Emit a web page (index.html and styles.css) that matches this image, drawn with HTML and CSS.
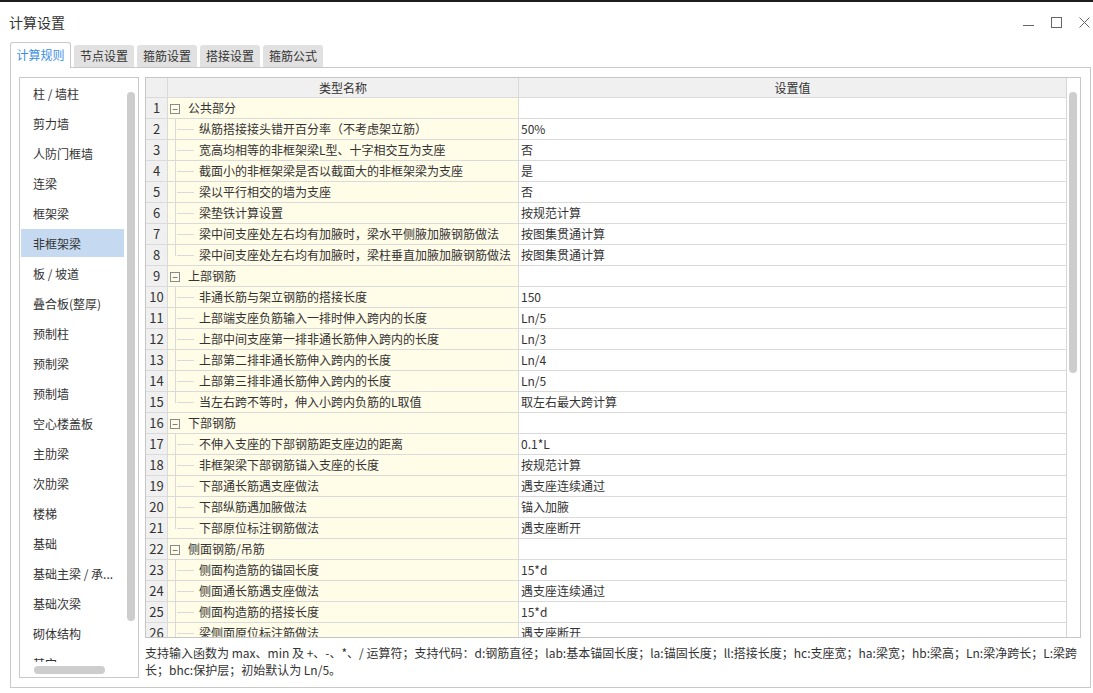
FILE: index.html
```html
<!DOCTYPE html>
<html lang="zh-CN">
<head>
<meta charset="utf-8">
<title>计算设置</title>
<link rel="stylesheet" href="styles.css">
</head>
<body>
<div class="topstrip"></div>
<div class="titlebar">
  <div class="title">计算设置</div>
  <div class="controls">
    <svg class="ctl" width="11" height="11" viewBox="0 0 11 11"><path d="M0 8.5H11" stroke="#666" stroke-width="1"/></svg>
    <svg class="ctl" width="11" height="11" viewBox="0 0 11 11"><rect x="0.5" y="0.5" width="10" height="10" fill="none" stroke="#666" stroke-width="1"/></svg>
    <svg class="ctl" width="11" height="11" viewBox="0 0 11 11"><path d="M0.5 0.5L10.5 10.5M10.5 0.5L0.5 10.5" stroke="#666" stroke-width="1"/></svg>
  </div>
</div>
<div class="tabs">
  <div class="tab active">计算规则</div>
  <div class="tab">节点设置</div>
  <div class="tab">箍筋设置</div>
  <div class="tab">搭接设置</div>
  <div class="tab">箍筋公式</div>
</div>
<div class="panel">
  <div class="listbox">
    <div class="items">
      <div class="item">柱 / 墙柱</div>
      <div class="item">剪力墙</div>
      <div class="item">人防门框墙</div>
      <div class="item">连梁</div>
      <div class="item">框架梁</div>
      <div class="item selected">非框架梁</div>
      <div class="item">板 / 坡道</div>
      <div class="item">叠合板(整厚)</div>
      <div class="item">预制柱</div>
      <div class="item">预制梁</div>
      <div class="item">预制墙</div>
      <div class="item">空心楼盖板</div>
      <div class="item">主肋梁</div>
      <div class="item">次肋梁</div>
      <div class="item">楼梯</div>
      <div class="item">基础</div>
      <div class="item">基础主梁 / 承...</div>
      <div class="item">基础次梁</div>
      <div class="item">砌体结构</div>
      <div class="item">其它</div>
    </div>
    <div class="vtrack"><div class="vthumb list-thumb"></div></div>
    <div class="htrack"><div class="hthumb"></div></div>
    <div class="corner"></div>
  </div>
  <div class="main">
    <div class="table">
      <div class="rows">
        <div class="row head"><div class="c num"></div><div class="c name hc">类型名称</div><div class="c val hc">设置值</div></div>

        <div class="row"><div class="c num">1</div><div class="c name grp"><span class="box">−</span>公共部分</div><div class="c val"></div></div>
        <div class="row"><div class="c num">2</div><div class="c name child"><span class="guide"></span>纵筋搭接接头错开百分率（不考虑架立筋）</div><div class="c val">50%</div></div>
        <div class="row"><div class="c num">3</div><div class="c name child"><span class="guide"></span>宽高均相等的非框架梁L型、十字相交互为支座</div><div class="c val">否</div></div>
        <div class="row"><div class="c num">4</div><div class="c name child"><span class="guide"></span>截面小的非框架梁是否以截面大的非框架梁为支座</div><div class="c val">是</div></div>
        <div class="row"><div class="c num">5</div><div class="c name child"><span class="guide"></span>梁以平行相交的墙为支座</div><div class="c val">否</div></div>
        <div class="row"><div class="c num">6</div><div class="c name child"><span class="guide"></span>梁垫铁计算设置</div><div class="c val">按规范计算</div></div>
        <div class="row"><div class="c num">7</div><div class="c name child"><span class="guide"></span>梁中间支座处左右均有加腋时，梁水平侧腋加腋钢筋做法</div><div class="c val">按图集贯通计算</div></div>
        <div class="row"><div class="c num">8</div><div class="c name child last"><span class="guide"></span>梁中间支座处左右均有加腋时，梁柱垂直加腋加腋钢筋做法</div><div class="c val">按图集贯通计算</div></div>

        <div class="row"><div class="c num">9</div><div class="c name grp"><span class="box">−</span>上部钢筋</div><div class="c val"></div></div>
        <div class="row"><div class="c num">10</div><div class="c name child"><span class="guide"></span>非通长筋与架立钢筋的搭接长度</div><div class="c val">150</div></div>
        <div class="row"><div class="c num">11</div><div class="c name child"><span class="guide"></span>上部端支座负筋输入一排时伸入跨内的长度</div><div class="c val">Ln/5</div></div>
        <div class="row"><div class="c num">12</div><div class="c name child"><span class="guide"></span>上部中间支座第一排非通长筋伸入跨内的长度</div><div class="c val">Ln/3</div></div>
        <div class="row"><div class="c num">13</div><div class="c name child"><span class="guide"></span>上部第二排非通长筋伸入跨内的长度</div><div class="c val">Ln/4</div></div>
        <div class="row"><div class="c num">14</div><div class="c name child"><span class="guide"></span>上部第三排非通长筋伸入跨内的长度</div><div class="c val">Ln/5</div></div>
        <div class="row"><div class="c num">15</div><div class="c name child last"><span class="guide"></span>当左右跨不等时，伸入小跨内负筋的L取值</div><div class="c val">取左右最大跨计算</div></div>

        <div class="row"><div class="c num">16</div><div class="c name grp"><span class="box">−</span>下部钢筋</div><div class="c val"></div></div>
        <div class="row"><div class="c num">17</div><div class="c name child"><span class="guide"></span>不伸入支座的下部钢筋距支座边的距离</div><div class="c val">0.1*L</div></div>
        <div class="row"><div class="c num">18</div><div class="c name child"><span class="guide"></span>非框架梁下部钢筋锚入支座的长度</div><div class="c val">按规范计算</div></div>
        <div class="row"><div class="c num">19</div><div class="c name child"><span class="guide"></span>下部通长筋遇支座做法</div><div class="c val">遇支座连续通过</div></div>
        <div class="row"><div class="c num">20</div><div class="c name child"><span class="guide"></span>下部纵筋遇加腋做法</div><div class="c val">锚入加腋</div></div>
        <div class="row"><div class="c num">21</div><div class="c name child last"><span class="guide"></span>下部原位标注钢筋做法</div><div class="c val">遇支座断开</div></div>

        <div class="row"><div class="c num">22</div><div class="c name grp"><span class="box">−</span>侧面钢筋/吊筋</div><div class="c val"></div></div>
        <div class="row"><div class="c num">23</div><div class="c name child"><span class="guide"></span>侧面构造筋的锚固长度</div><div class="c val">15*d</div></div>
        <div class="row"><div class="c num">24</div><div class="c name child"><span class="guide"></span>侧面通长筋遇支座做法</div><div class="c val">遇支座连续通过</div></div>
        <div class="row"><div class="c num">25</div><div class="c name child"><span class="guide"></span>侧面构造筋的搭接长度</div><div class="c val">15*d</div></div>
        <div class="row"><div class="c num">26</div><div class="c name child"><span class="guide"></span>梁侧面原位标注筋做法</div><div class="c val">遇支座断开</div></div>
      </div>
      <div class="tscroll"><div class="vthumb table-thumb"></div></div>
    </div>
    <div class="note">支持输入函数为 max、min 及 +、-、*、/ 运算符；支持代码：d:钢筋直径；lab:基本锚固长度；la:锚固长度；ll:搭接长度；hc:支座宽；ha:梁宽；hb:梁高；Ln:梁净跨长；L:梁跨<br>长；bhc:保护层；初始默认为 Ln/5。</div>
  </div>
</div>
</body>
</html>
```
FILE: styles.css
```css
* { box-sizing: border-box; }
html, body { margin: 0; padding: 0; background: #fff; }
body {
  width: 1093px;
  height: 693px;
  overflow: hidden;
  font-family: "Noto Sans CJK SC", "Microsoft YaHei", sans-serif;
  font-size: 12px;
  color: #333;
}
.topstrip { height: 2px; background: #1d1d1d; }
.titlebar {
  height: 40px;
  display: flex;
  align-items: center;
  justify-content: space-between;
  padding: 0 3px 0 9px;
}
.title { font-size: 14px; line-height: 20px; color: #333; }
.controls { display: flex; gap: 17px; align-items: center; padding-top: 1px; }
.ctl { display: block; }

.tabs {
  height: 25px;
  display: flex;
  align-items: flex-end;
  gap: 3px;
  padding-left: 10px;
}
.tab {
  width: 60px;
  height: 22px;
  background: #e1e1e1;
  border-radius: 3px 3px 0 0;
  display: flex;
  align-items: center;
  justify-content: center;
  line-height: 16px;
  color: #333;
}
.tab.active {
  width: 61px;
  height: 26px;
  margin-bottom: -1px;
  background: #fff;
  border: 1px solid #c9c9c9;
  border-bottom: none;
  color: #3a8ee6;
  position: relative;
  z-index: 1;
  padding-bottom: 1px;
}

.panel {
  width: 1081px;
  height: 621px;
  margin-left: 10px;
  border: 1px solid #c9c9c9;
  padding: 9px 9px 9px 8px;
  display: flex;
  gap: 6px;
}

.listbox {
  width: 120px;
  height: 601px;
  border: 1px solid #c9c9c9;
  display: grid;
  grid-template-columns: 1fr 14px;
  grid-template-rows: 1fr 15px;
  overflow: hidden;
}
.items { padding-top: 1px; overflow: hidden; }
.item {
  width: 103px;
  height: 28px;
  margin: 0 0 2px 1px;
  padding-left: 12px;
  display: flex;
  align-items: center;
  white-space: nowrap;
  color: #333;
}
.item.selected { background: #c5daf1; }
.vtrack { position: relative; }
.vthumb { width: 8px; background: #cdcdcd; border-radius: 4px; }
.list-thumb { margin: 14px 0 0 3px; height: 529px; }
.hthumb { width: 71px; height: 8px; margin: 4px 0 0 14px; background: #cdcdcd; border-radius: 4px; }

.main { flex: 1; display: flex; flex-direction: column; }
.table {
  height: 561px;
  border: 1px solid #c6c6c6;
  display: flex;
  overflow: hidden;
}
.rows { flex: 1; overflow: hidden; }
.tscroll { width: 14px; border-left: 1px solid #d6d6d6; background: #fff; }
.table-thumb { margin: 14px 0 0 2px; height: 281px; }

.row {
  display: grid;
  grid-template-columns: 22px 351px 1fr;
  height: 21px;
  border-bottom: 1px solid #dadada;
}
.row.head { height: 20px; background: #f0f0f0; }
.c {
  display: flex;
  align-items: center;
  white-space: nowrap;
  overflow: hidden;
  line-height: 16px;
}
.num {
  background: #f0f0f0;
  border-right: 1px solid #dadada;
  justify-content: center;
  font-size: 13px;
  color: #333;
}
.name {
  background: #fffce8;
  border-right: 1px solid #dadada;
}
.head .name { background: #f0f0f0; }
.val { padding-left: 2px; background: #fff; }
.head .val { background: #f0f0f0; }
.hc { justify-content: center; padding-left: 0; }

.grp { padding-left: 2px; }
.box {
  width: 10px;
  height: 10px;
  border: 1px solid #8a8a8a;
  margin-right: 8px;
  margin-top: 1px;
  display: flex;
  align-items: center;
  justify-content: center;
  font-size: 10px;
  line-height: 8px;
  color: #555;
  flex: none;
}
.child { align-self: stretch; }
.guide {
  flex: none;
  align-self: stretch;
  width: 19px;
  margin: 0 5px 0 7px;
  background:
    linear-gradient(#dadada, #dadada) 0 0 / 1px 100% no-repeat,
    linear-gradient(#dadada, #dadada) 2px 10px / 17px 1px no-repeat;
}
.last .guide {
  background:
    linear-gradient(#dadada, #dadada) 0 0 / 1px 11px no-repeat,
    linear-gradient(#dadada, #dadada) 2px 10px / 17px 1px no-repeat;
}

.note {
  padding-top: 6px;
  line-height: 17px;
  white-space: nowrap;
  color: #333;
}
```
